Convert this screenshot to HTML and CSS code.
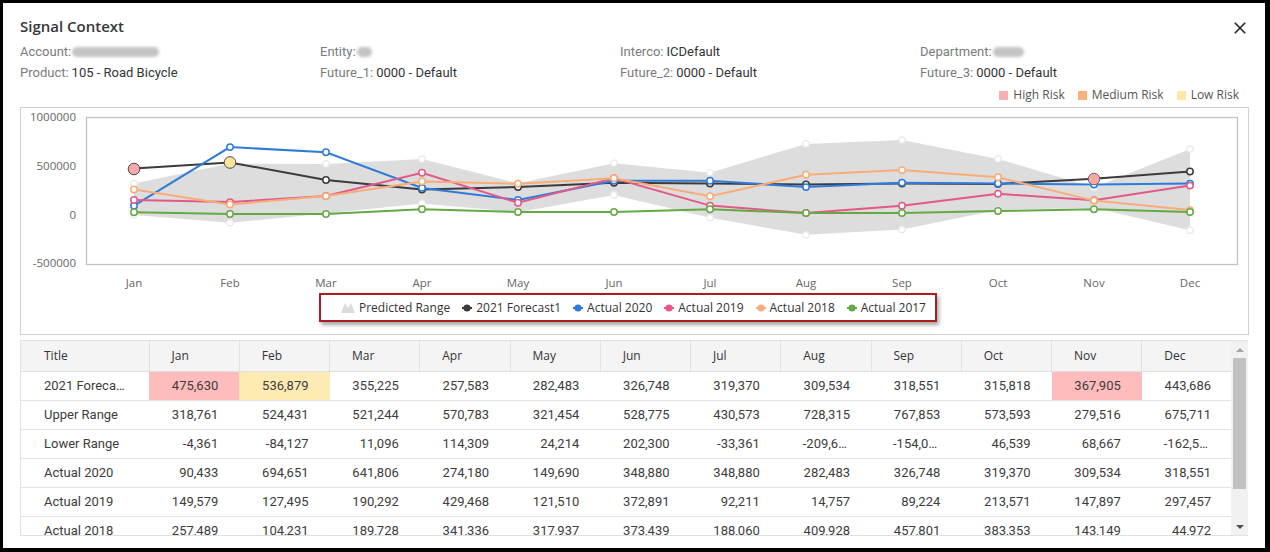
FILE: index.html
```html
<!DOCTYPE html>
<html>
<head>
<meta charset="utf-8">
<title>Signal Context</title>
<link rel="stylesheet" href="styles.css">
</head>
<body>
<div class="dialog">
  <div class="header">
    <div class="title">Signal Context</div>
    <svg class="close" width="12" height="12" viewBox="0 0 12 12"><path d="M0.8 0.8L11.2 11.2M11.2 0.8L0.8 11.2" stroke="#222" stroke-width="1.6" fill="none"/></svg>
  </div>

  <div class="info">
    <div class="field"><span class="lbl">Account:</span><span class="blur blur-acc"></span></div>
    <div class="field"><span class="lbl">Entity:</span><span class="blur blur-ent"></span></div>
    <div class="field"><span class="lbl">Interco:</span><span class="val">ICDefault</span></div>
    <div class="field"><span class="lbl">Department:</span><span class="blur blur-dep"></span></div>
    <div class="field"><span class="lbl">Product:</span><span class="val">105 - Road Bicycle</span></div>
    <div class="field"><span class="lbl">Future_1:</span><span class="val">0000 - Default</span></div>
    <div class="field"><span class="lbl">Future_2:</span><span class="val">0000 - Default</span></div>
    <div class="field"><span class="lbl">Future_3:</span><span class="val">0000 - Default</span></div>
  </div>

  <div class="risk">
    <div class="risk-item"><span class="sq sq-high"></span>High Risk</div>
    <div class="risk-item"><span class="sq sq-med"></span>Medium Risk</div>
    <div class="risk-item"><span class="sq sq-low"></span>Low Risk</div>
  </div>

  <div class="chart">
    <svg class="plot" width="1227" height="184" viewBox="21 108 1227 184">
      <defs>
        <marker id="mk-r" viewBox="0 0 10 10" refX="5" refY="5" markerWidth="10" markerHeight="10" markerUnits="userSpaceOnUse"><circle cx="5" cy="5" r="3.2" fill="#fff" stroke="#e9e9e9" stroke-width="1.2"/></marker>
        <marker id="mk-f" viewBox="0 0 10 10" refX="5" refY="5" markerWidth="10" markerHeight="10" markerUnits="userSpaceOnUse"><circle cx="5" cy="5" r="3.2" fill="#fff" stroke="#3b3b3b" stroke-width="1.5"/></marker>
        <marker id="mk-b" viewBox="0 0 10 10" refX="5" refY="5" markerWidth="10" markerHeight="10" markerUnits="userSpaceOnUse"><circle cx="5" cy="5" r="3.2" fill="#fff" stroke="#2f7bd9" stroke-width="1.5"/></marker>
        <marker id="mk-p" viewBox="0 0 10 10" refX="5" refY="5" markerWidth="10" markerHeight="10" markerUnits="userSpaceOnUse"><circle cx="5" cy="5" r="3.2" fill="#fff" stroke="#e2598a" stroke-width="1.5"/></marker>
        <marker id="mk-o" viewBox="0 0 10 10" refX="5" refY="5" markerWidth="10" markerHeight="10" markerUnits="userSpaceOnUse"><circle cx="5" cy="5" r="3.2" fill="#fff" stroke="#f8ad78" stroke-width="1.5"/></marker>
        <marker id="mk-g" viewBox="0 0 10 10" refX="5" refY="5" markerWidth="10" markerHeight="10" markerUnits="userSpaceOnUse"><circle cx="5" cy="5" r="3.2" fill="#fff" stroke="#66a844" stroke-width="1.5"/></marker>
      </defs>

      <g class="yaxis" font-family="Open Sans, sans-serif" font-size="11.5" fill="#666" text-anchor="end">
        <text x="76" y="121">1000000</text>
        <text x="76" y="170">500000</text>
        <text x="76" y="218.5">0</text>
        <text x="76" y="267">-500000</text>
      </g>

      <rect x="86.5" y="117.5" width="1151" height="147" fill="#fff" stroke="#c2c2c2" stroke-width="1.3"/>

      <polygon fill="#dddddd" points="134,183.6 230,163.6 326,163.9 422,159.1 518,183.3 614,163.2 710,172.7 806,143.9 902,140 998,158.9 1094,187.4 1190,149 1190,230.3 1094,207.8 998,210 902,229.4 806,234.8 710,217.7 614,194.9 518,212.2 422,203.4 326,213.4 230,222.7 134,214.9"/>
      <polyline fill="none" stroke="none" marker-start="url(#mk-r)" marker-mid="url(#mk-r)" marker-end="url(#mk-r)" points="134,183.6 230,163.6 326,163.9 422,159.1 518,183.3 614,163.2 710,172.7 806,143.9 902,140 998,158.9 1094,187.4 1190,149"/>
      <polyline fill="none" stroke="none" marker-start="url(#mk-r)" marker-mid="url(#mk-r)" marker-end="url(#mk-r)" points="134,214.9 230,222.7 326,213.4 422,203.4 518,212.2 614,194.9 710,217.7 806,234.8 902,229.4 998,210 1094,207.8 1190,230.3"/>

      <polyline fill="none" stroke="#3b3b3b" stroke-width="2" marker-start="url(#mk-f)" marker-mid="url(#mk-f)" marker-end="url(#mk-f)" points="134,168.4 230,162.4 326,180 422,189.5 518,187.1 614,182.8 710,183.5 806,184.5 902,183.6 998,183.9 1094,178.8 1190,171.5"/>
      <polyline fill="none" stroke="#2f7bd9" stroke-width="2" marker-start="url(#mk-b)" marker-mid="url(#mk-b)" marker-end="url(#mk-b)" points="134,205.7 230,147.1 326,152.2 422,187.9 518,200 614,180.7 710,180.7 806,187.1 902,182.8 998,183.5 1094,184.5 1190,183.6"/>
      <polyline fill="none" stroke="#e2598a" stroke-width="2" marker-start="url(#mk-p)" marker-mid="url(#mk-p)" marker-end="url(#mk-p)" points="134,200 230,202.1 326,196 422,172.8 518,202.7 614,178.3 710,205.6 806,213.1 902,205.8 998,193.8 1094,200.2 1190,185.6"/>
      <polyline fill="none" stroke="#f8ad78" stroke-width="2" marker-start="url(#mk-o)" marker-mid="url(#mk-o)" marker-end="url(#mk-o)" points="134,189.5 230,204.4 326,196.1 422,181.4 518,183.7 614,178.3 710,196.3 806,174.7 902,170.1 998,177.3 1094,200.6 1190,210.1"/>
      <polyline fill="none" stroke="#66a844" stroke-width="2" marker-start="url(#mk-g)" marker-mid="url(#mk-g)" marker-end="url(#mk-g)" points="134,212.3 230,214 326,214 422,209.3 518,212 614,212 710,209.3 806,213 902,213 998,211 1094,209.3 1190,212"/>

      <circle cx="134" cy="169" r="5.8" fill="#f6a7a7" stroke="#4a4a4a" stroke-width="1"/>
      <circle cx="230" cy="162.5" r="5.8" fill="#fde39c" stroke="#4a4a4a" stroke-width="1"/>
      <circle cx="1094" cy="179" r="5.8" fill="#f6a7a7" stroke="#6a6a6a" stroke-width="1"/>

      <g class="xaxis" font-family="Open Sans, sans-serif" font-size="11.5" fill="#666" text-anchor="middle">
        <text x="134" y="287">Jan</text>
        <text x="230" y="287">Feb</text>
        <text x="326" y="287">Mar</text>
        <text x="422" y="287">Apr</text>
        <text x="518" y="287">May</text>
        <text x="614" y="287">Jun</text>
        <text x="710" y="287">Jul</text>
        <text x="806" y="287">Aug</text>
        <text x="902" y="287">Sep</text>
        <text x="998" y="287">Oct</text>
        <text x="1094" y="287">Nov</text>
        <text x="1190" y="287">Dec</text>
      </g>
    </svg>

    <div class="legend">
      <div class="lg-item"><svg class="lg-area" width="14" height="11" viewBox="0 0 14 11"><path d="M0 11L4 1L7 6L10 1L14 11Z" fill="#dcdcdc"/></svg>Predicted Range</div>
      <div class="lg-item"><svg class="lg-mk" width="10" height="10" viewBox="0 0 10 10"><path d="M0 5H10" stroke="#3b3b3b" stroke-width="2"/><circle cx="5" cy="5" r="3.6" fill="#3b3b3b"/></svg>2021 Forecast1</div>
      <div class="lg-item"><svg class="lg-mk" width="10" height="10" viewBox="0 0 10 10"><path d="M0 5H10" stroke="#2f7bd9" stroke-width="2"/><circle cx="5" cy="5" r="3.6" fill="#2f7bd9"/></svg>Actual 2020</div>
      <div class="lg-item"><svg class="lg-mk" width="10" height="10" viewBox="0 0 10 10"><path d="M0 5H10" stroke="#e2598a" stroke-width="2"/><circle cx="5" cy="5" r="3.6" fill="#e2598a"/></svg>Actual 2019</div>
      <div class="lg-item"><svg class="lg-mk" width="10" height="10" viewBox="0 0 10 10"><path d="M0 5H10" stroke="#f8ad78" stroke-width="2"/><circle cx="5" cy="5" r="3.6" fill="#f8ad78"/></svg>Actual 2018</div>
      <div class="lg-item"><svg class="lg-mk" width="10" height="10" viewBox="0 0 10 10"><path d="M0 5H10" stroke="#66a844" stroke-width="2"/><circle cx="5" cy="5" r="3.6" fill="#66a844"/></svg>Actual 2017</div>
    </div>
  </div>

  <div class="grid">
    <div class="grid-body">
      <table class="tbl">
        <colgroup>
          <col class="c-title"><col class="c-m"><col class="c-m"><col class="c-m"><col class="c-m"><col class="c-m"><col class="c-m"><col class="c-m"><col class="c-m"><col class="c-m"><col class="c-m"><col class="c-m"><col class="c-m">
        </colgroup>
        <thead>
          <tr><th class="th-title">Title</th><th>Jan</th><th>Feb</th><th>Mar</th><th>Apr</th><th>May</th><th>Jun</th><th>Jul</th><th>Aug</th><th>Sep</th><th>Oct</th><th>Nov</th><th class="th-last">Dec</th></tr>
        </thead>
        <tbody>
          <tr><td class="td-title">2021 Forecast1</td><td class="high">475,630</td><td class="low">536,879</td><td>355,225</td><td>257,583</td><td>282,483</td><td>326,748</td><td>319,370</td><td>309,534</td><td>318,551</td><td>315,818</td><td class="high">367,905</td><td>443,686</td></tr>
          <tr><td class="td-title">Upper Range</td><td>318,761</td><td>524,431</td><td>521,244</td><td>570,783</td><td>321,454</td><td>528,775</td><td>430,573</td><td>728,315</td><td>767,853</td><td>573,593</td><td>279,516</td><td>675,711</td></tr>
          <tr><td class="td-title">Lower Range</td><td>-4,361</td><td>-84,127</td><td>11,096</td><td>114,309</td><td>24,214</td><td>202,300</td><td>-33,361</td><td>-209,612</td><td>-154,038</td><td>46,539</td><td>68,667</td><td>-162,540</td></tr>
          <tr><td class="td-title">Actual 2020</td><td>90,433</td><td>694,651</td><td>641,806</td><td>274,180</td><td>149,690</td><td>348,880</td><td>348,880</td><td>282,483</td><td>326,748</td><td>319,370</td><td>309,534</td><td>318,551</td></tr>
          <tr><td class="td-title">Actual 2019</td><td>149,579</td><td>127,495</td><td>190,292</td><td>429,468</td><td>121,510</td><td>372,891</td><td>92,211</td><td>14,757</td><td>89,224</td><td>213,571</td><td>147,897</td><td>297,457</td></tr>
          <tr><td class="td-title">Actual 2018</td><td>257,489</td><td>104,231</td><td>189,728</td><td>341,336</td><td>317,937</td><td>373,439</td><td>188,060</td><td>409,928</td><td>457,801</td><td>383,353</td><td>143,149</td><td>44,972</td></tr>
          <tr><td class="td-title">Actual 2017</td><td>23,114</td><td>5,012</td><td>4,876</td><td>53,208</td><td>26,331</td><td>25,904</td><td>53,117</td><td>15,412</td><td>15,209</td><td>36,045</td><td>53,320</td><td>26,108</td></tr>
        </tbody>
      </table>
    </div>
    <div class="scrollbar">
      <div class="sb-btn"><span class="arrow-up"></span></div>
      <div class="sb-track"><div class="sb-thumb"></div></div>
      <div class="sb-btn"><span class="arrow-down"></span></div>
    </div>
  </div>
</div>
</body>
</html>
```

FILE: styles.css
```css
* { box-sizing: border-box; }

html, body {
  margin: 0;
  padding: 0;
  background: #000;
  width: 1270px;
  height: 552px;
  overflow: hidden;
}

.dialog {
  margin: 3px 5px 0 3px;
  height: 545px;
  background: #fff;
  padding: 13px 16px 0 17px;
  font-family: Roboto, "Open Sans", Arial, sans-serif;
  color: #333;
}

.header {
  display: flex;
  justify-content: space-between;
  align-items: flex-start;
  height: 20px;
}

.title {
  font-family: "Open Sans", Arial, sans-serif;
  font-size: 15px;
  font-weight: 600;
  line-height: 20px;
  color: #363636;
}

.close {
  display: block;
  margin-top: 6px;
  margin-right: 3px;
}

.info {
  display: grid;
  grid-template-columns: repeat(4, 300px);
  margin-top: 5px;
  font-size: 13px;
  line-height: 21px;
}

.field {
  display: flex;
  align-items: center;
  white-space: nowrap;
}

.lbl { color: #7a7a7a; margin-right: 3px; }
.val { color: #333; }

.blur {
  display: inline-block;
  height: 10px;
  background: #c4c4c4;
  border-radius: 5px;
  filter: blur(1.5px);
  margin-left: -2px;
}
.blur-acc { width: 87px; }
.blur-ent { width: 15px; }
.blur-dep { width: 31px; }

.risk {
  display: flex;
  justify-content: flex-end;
  gap: 13px;
  margin-top: 5px;
  padding-right: 10px;
  height: 14px;
  font-family: "Open Sans", Arial, sans-serif;
  font-size: 12px;
  line-height: 14px;
  color: #555;
}

.risk-item {
  display: flex;
  align-items: center;
  gap: 5px;
}

.sq { display: inline-block; width: 9px; height: 9px; }
.sq-high { background: #f8b0b0; }
.sq-med { background: #f9b07a; }
.sq-low { background: #fde8a8; }

.chart {
  margin-top: 5px;
  height: 228px;
  border: 1px solid #d0d0d0;
}

.plot { display: block; }

.legend {
  display: flex;
  align-items: center;
  gap: 12px;
  margin: 1px 0 0 298px;
  width: 618px;
  height: 29px;
  padding-left: 20px;
  border: 2px solid #a81d1d;
  box-shadow: 2px 3px 4px rgba(0, 0, 0, 0.35);
  font-family: "Open Sans", Arial, sans-serif;
  font-size: 12px;
  color: #333;
}

.lg-item {
  display: flex;
  align-items: center;
  gap: 4px;
  white-space: nowrap;
}

.lg-area, .lg-mk { display: block; }

.grid {
  display: flex;
  margin-top: 5px;
  height: 196px;
  border: 1px solid #e0e0e0;
  border-right: none;
  width: 1228px;
}

.grid-body {
  width: 1211px;
  overflow: hidden;
}

.tbl {
  width: 1211px;
  table-layout: fixed;
  border-collapse: collapse;
  font-size: 13px;
  color: #3c3c3c;
}

.c-title { width: 128px; }
.c-m { width: 90.25px; }

.tbl th {
  height: 30px;
  padding: 0 0 0 22px;
  background: #f4f4f4;
  border-right: 1px solid #e0e0e0;
  border-bottom: 1px solid #e0e0e0;
  text-align: left;
  font-family: "Open Sans", Arial, sans-serif;
  font-size: 12px;
  font-weight: 400;
  color: #333;
}
.tbl th.th-title { padding-left: 23px; }
.tbl th.th-last { border-right: none; }

.tbl td {
  height: 29px;
  padding: 0 21px 0 22px;
  border-bottom: 1px solid #e3e3e3;
  text-align: right;
  white-space: nowrap;
  overflow: hidden;
  text-overflow: ellipsis;
}

.tbl td.td-title {
  text-align: left;
  padding-left: 23px;
}

.tbl td.high { background: #ffbcbc; }
.tbl td.low { background: #feebb4; }

.scrollbar {
  width: 17px;
  display: flex;
  flex-direction: column;
  background: #f1f1f1;
}

.sb-btn {
  height: 17px;
  display: flex;
  align-items: center;
  justify-content: center;
}

.arrow-up {
  width: 0; height: 0;
  border-left: 4px solid transparent;
  border-right: 4px solid transparent;
  border-bottom: 4px solid #a3a3a3;
}

.arrow-down {
  width: 0; height: 0;
  border-left: 4px solid transparent;
  border-right: 4px solid transparent;
  border-top: 4px solid #505050;
}

.sb-track {
  flex: 1;
  padding: 0 2px;
}

.sb-thumb {
  height: 131px;
  background: #c1c1c1;
}
```
